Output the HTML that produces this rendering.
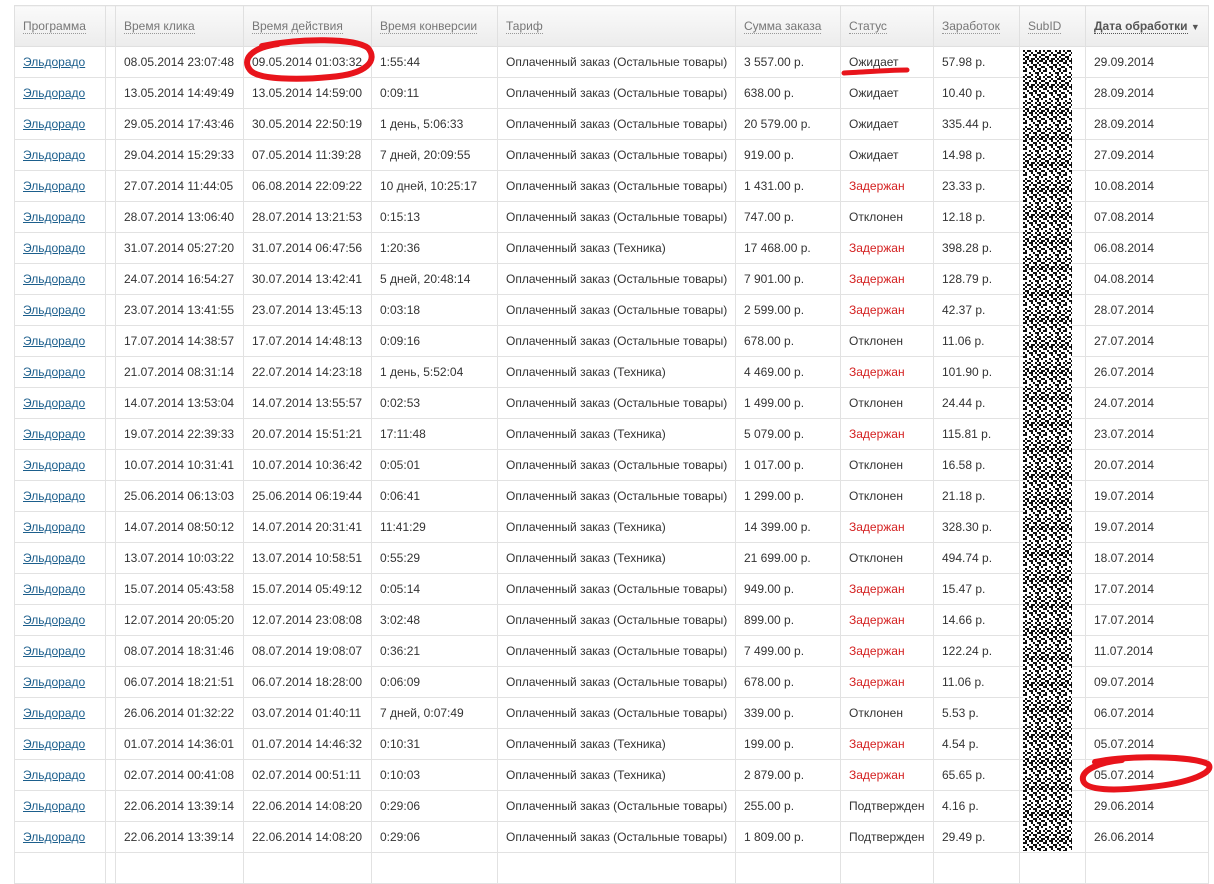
<!DOCTYPE html>
<html><head><meta charset="utf-8"><style>
body{margin:0;background:#fff;width:1214px;height:860px;overflow:hidden;position:relative;font-family:"Liberation Sans",Arial,sans-serif;font-size:12px;color:#333}
table{position:absolute;left:14px;top:5px;border-collapse:collapse;table-layout:fixed;width:1194px}
td,th{border:1px solid #e2e2e2;height:30px;padding:0 0 0 8px;white-space:nowrap;overflow:hidden;text-align:left;font-weight:normal}
th{height:40px;background:linear-gradient(#fafafa,#ececec);color:#777;border-color:#e0e0e0}
th span{border-bottom:1px dotted #999}
th.s{color:#555;font-weight:bold}
th.s span{border-bottom:1px dotted #555}
td a{color:#1b5e8c;text-decoration:underline}
.r{color:#d42020}
td.e,th.e{padding:0}
#noise{position:absolute;left:1023px;top:50px;width:49px;height:801px}
</style></head><body>
<table>
<colgroup><col style="width:91px"><col style="width:10px"><col style="width:128px"><col style="width:128px"><col style="width:126px"><col style="width:238px"><col style="width:105px"><col style="width:93px"><col style="width:86px"><col style="width:66px"><col style="width:123px"></colgroup>
<tr><th><span>Программа</span></th><th class="e"></th><th><span>Время клика</span></th><th><span>Время действия</span></th><th><span>Время конверсии</span></th><th><span>Тариф</span></th><th><span>Сумма заказа</span></th><th><span>Статус</span></th><th><span>Заработок</span></th><th><span>SubID</span></th><th class="s"><span>Дата обработки</span> <span style="border:0;font-size:9px">▼</span></th></tr>
<tr><td><a>Эльдорадо</a></td><td class="e"></td><td>08.05.2014 23:07:48</td><td>09.05.2014 01:03:32</td><td>1:55:44</td><td>Оплаченный заказ (Остальные товары)</td><td>3 557.00 р.</td><td>Ожидает</td><td>57.98 р.</td><td></td><td>29.09.2014</td></tr>
<tr><td><a>Эльдорадо</a></td><td class="e"></td><td>13.05.2014 14:49:49</td><td>13.05.2014 14:59:00</td><td>0:09:11</td><td>Оплаченный заказ (Остальные товары)</td><td>638.00 р.</td><td>Ожидает</td><td>10.40 р.</td><td></td><td>28.09.2014</td></tr>
<tr><td><a>Эльдорадо</a></td><td class="e"></td><td>29.05.2014 17:43:46</td><td>30.05.2014 22:50:19</td><td>1 день, 5:06:33</td><td>Оплаченный заказ (Остальные товары)</td><td>20 579.00 р.</td><td>Ожидает</td><td>335.44 р.</td><td></td><td>28.09.2014</td></tr>
<tr><td><a>Эльдорадо</a></td><td class="e"></td><td>29.04.2014 15:29:33</td><td>07.05.2014 11:39:28</td><td>7 дней, 20:09:55</td><td>Оплаченный заказ (Остальные товары)</td><td>919.00 р.</td><td>Ожидает</td><td>14.98 р.</td><td></td><td>27.09.2014</td></tr>
<tr><td><a>Эльдорадо</a></td><td class="e"></td><td>27.07.2014 11:44:05</td><td>06.08.2014 22:09:22</td><td>10 дней, 10:25:17</td><td>Оплаченный заказ (Остальные товары)</td><td>1 431.00 р.</td><td class="r">Задержан</td><td>23.33 р.</td><td></td><td>10.08.2014</td></tr>
<tr><td><a>Эльдорадо</a></td><td class="e"></td><td>28.07.2014 13:06:40</td><td>28.07.2014 13:21:53</td><td>0:15:13</td><td>Оплаченный заказ (Остальные товары)</td><td>747.00 р.</td><td>Отклонен</td><td>12.18 р.</td><td></td><td>07.08.2014</td></tr>
<tr><td><a>Эльдорадо</a></td><td class="e"></td><td>31.07.2014 05:27:20</td><td>31.07.2014 06:47:56</td><td>1:20:36</td><td>Оплаченный заказ (Техника)</td><td>17 468.00 р.</td><td class="r">Задержан</td><td>398.28 р.</td><td></td><td>06.08.2014</td></tr>
<tr><td><a>Эльдорадо</a></td><td class="e"></td><td>24.07.2014 16:54:27</td><td>30.07.2014 13:42:41</td><td>5 дней, 20:48:14</td><td>Оплаченный заказ (Остальные товары)</td><td>7 901.00 р.</td><td class="r">Задержан</td><td>128.79 р.</td><td></td><td>04.08.2014</td></tr>
<tr><td><a>Эльдорадо</a></td><td class="e"></td><td>23.07.2014 13:41:55</td><td>23.07.2014 13:45:13</td><td>0:03:18</td><td>Оплаченный заказ (Остальные товары)</td><td>2 599.00 р.</td><td class="r">Задержан</td><td>42.37 р.</td><td></td><td>28.07.2014</td></tr>
<tr><td><a>Эльдорадо</a></td><td class="e"></td><td>17.07.2014 14:38:57</td><td>17.07.2014 14:48:13</td><td>0:09:16</td><td>Оплаченный заказ (Остальные товары)</td><td>678.00 р.</td><td>Отклонен</td><td>11.06 р.</td><td></td><td>27.07.2014</td></tr>
<tr><td><a>Эльдорадо</a></td><td class="e"></td><td>21.07.2014 08:31:14</td><td>22.07.2014 14:23:18</td><td>1 день, 5:52:04</td><td>Оплаченный заказ (Техника)</td><td>4 469.00 р.</td><td class="r">Задержан</td><td>101.90 р.</td><td></td><td>26.07.2014</td></tr>
<tr><td><a>Эльдорадо</a></td><td class="e"></td><td>14.07.2014 13:53:04</td><td>14.07.2014 13:55:57</td><td>0:02:53</td><td>Оплаченный заказ (Остальные товары)</td><td>1 499.00 р.</td><td>Отклонен</td><td>24.44 р.</td><td></td><td>24.07.2014</td></tr>
<tr><td><a>Эльдорадо</a></td><td class="e"></td><td>19.07.2014 22:39:33</td><td>20.07.2014 15:51:21</td><td>17:11:48</td><td>Оплаченный заказ (Техника)</td><td>5 079.00 р.</td><td class="r">Задержан</td><td>115.81 р.</td><td></td><td>23.07.2014</td></tr>
<tr><td><a>Эльдорадо</a></td><td class="e"></td><td>10.07.2014 10:31:41</td><td>10.07.2014 10:36:42</td><td>0:05:01</td><td>Оплаченный заказ (Остальные товары)</td><td>1 017.00 р.</td><td>Отклонен</td><td>16.58 р.</td><td></td><td>20.07.2014</td></tr>
<tr><td><a>Эльдорадо</a></td><td class="e"></td><td>25.06.2014 06:13:03</td><td>25.06.2014 06:19:44</td><td>0:06:41</td><td>Оплаченный заказ (Остальные товары)</td><td>1 299.00 р.</td><td>Отклонен</td><td>21.18 р.</td><td></td><td>19.07.2014</td></tr>
<tr><td><a>Эльдорадо</a></td><td class="e"></td><td>14.07.2014 08:50:12</td><td>14.07.2014 20:31:41</td><td>11:41:29</td><td>Оплаченный заказ (Техника)</td><td>14 399.00 р.</td><td class="r">Задержан</td><td>328.30 р.</td><td></td><td>19.07.2014</td></tr>
<tr><td><a>Эльдорадо</a></td><td class="e"></td><td>13.07.2014 10:03:22</td><td>13.07.2014 10:58:51</td><td>0:55:29</td><td>Оплаченный заказ (Техника)</td><td>21 699.00 р.</td><td>Отклонен</td><td>494.74 р.</td><td></td><td>18.07.2014</td></tr>
<tr><td><a>Эльдорадо</a></td><td class="e"></td><td>15.07.2014 05:43:58</td><td>15.07.2014 05:49:12</td><td>0:05:14</td><td>Оплаченный заказ (Остальные товары)</td><td>949.00 р.</td><td class="r">Задержан</td><td>15.47 р.</td><td></td><td>17.07.2014</td></tr>
<tr><td><a>Эльдорадо</a></td><td class="e"></td><td>12.07.2014 20:05:20</td><td>12.07.2014 23:08:08</td><td>3:02:48</td><td>Оплаченный заказ (Остальные товары)</td><td>899.00 р.</td><td class="r">Задержан</td><td>14.66 р.</td><td></td><td>17.07.2014</td></tr>
<tr><td><a>Эльдорадо</a></td><td class="e"></td><td>08.07.2014 18:31:46</td><td>08.07.2014 19:08:07</td><td>0:36:21</td><td>Оплаченный заказ (Остальные товары)</td><td>7 499.00 р.</td><td class="r">Задержан</td><td>122.24 р.</td><td></td><td>11.07.2014</td></tr>
<tr><td><a>Эльдорадо</a></td><td class="e"></td><td>06.07.2014 18:21:51</td><td>06.07.2014 18:28:00</td><td>0:06:09</td><td>Оплаченный заказ (Остальные товары)</td><td>678.00 р.</td><td class="r">Задержан</td><td>11.06 р.</td><td></td><td>09.07.2014</td></tr>
<tr><td><a>Эльдорадо</a></td><td class="e"></td><td>26.06.2014 01:32:22</td><td>03.07.2014 01:40:11</td><td>7 дней, 0:07:49</td><td>Оплаченный заказ (Остальные товары)</td><td>339.00 р.</td><td>Отклонен</td><td>5.53 р.</td><td></td><td>06.07.2014</td></tr>
<tr><td><a>Эльдорадо</a></td><td class="e"></td><td>01.07.2014 14:36:01</td><td>01.07.2014 14:46:32</td><td>0:10:31</td><td>Оплаченный заказ (Техника)</td><td>199.00 р.</td><td class="r">Задержан</td><td>4.54 р.</td><td></td><td>05.07.2014</td></tr>
<tr><td><a>Эльдорадо</a></td><td class="e"></td><td>02.07.2014 00:41:08</td><td>02.07.2014 00:51:11</td><td>0:10:03</td><td>Оплаченный заказ (Техника)</td><td>2 879.00 р.</td><td class="r">Задержан</td><td>65.65 р.</td><td></td><td>05.07.2014</td></tr>
<tr><td><a>Эльдорадо</a></td><td class="e"></td><td>22.06.2014 13:39:14</td><td>22.06.2014 14:08:20</td><td>0:29:06</td><td>Оплаченный заказ (Остальные товары)</td><td>255.00 р.</td><td>Подтвержден</td><td>4.16 р.</td><td></td><td>29.06.2014</td></tr>
<tr><td><a>Эльдорадо</a></td><td class="e"></td><td>22.06.2014 13:39:14</td><td>22.06.2014 14:08:20</td><td>0:29:06</td><td>Оплаченный заказ (Остальные товары)</td><td>1 809.00 р.</td><td>Подтвержден</td><td>29.49 р.</td><td></td><td>26.06.2014</td></tr>
<tr><td></td><td class="e"></td><td></td><td></td><td></td><td></td><td></td><td></td><td></td><td></td><td></td></tr>
</table>
<svg id="noise" width="49" height="801">
<defs><pattern id="p" width="20" height="26" patternUnits="userSpaceOnUse">
<rect width="20" height="26" fill="#fff"/>
<g fill="#111">
<rect x="0" y="0" width="2" height="2"/><rect x="4" y="0" width="4" height="2"/><rect x="12" y="0" width="2" height="2"/><rect x="16" y="0" width="2" height="2"/>
<rect x="2" y="2" width="2" height="2"/><rect x="8" y="2" width="2" height="2"/><rect x="14" y="2" width="4" height="2"/>
<rect x="0" y="4" width="2" height="2"/><rect x="6" y="4" width="2" height="2"/><rect x="10" y="4" width="4" height="2"/><rect x="18" y="4" width="2" height="2"/>
<rect x="2" y="6" width="4" height="2"/><rect x="12" y="6" width="2" height="2"/><rect x="16" y="6" width="2" height="2"/>
<rect x="0" y="8" width="2" height="2"/><rect x="4" y="8" width="2" height="2"/><rect x="8" y="8" width="4" height="2"/><rect x="14" y="8" width="2" height="2"/><rect x="18" y="8" width="2" height="2"/>
<rect x="2" y="10" width="2" height="2"/><rect x="6" y="10" width="4" height="2"/><rect x="12" y="10" width="2" height="2"/><rect x="16" y="10" width="4" height="2"/>
<rect x="0" y="12" width="4" height="2"/><rect x="8" y="12" width="2" height="2"/><rect x="14" y="12" width="2" height="2"/>
<rect x="4" y="14" width="2" height="2"/><rect x="10" y="14" width="4" height="2"/><rect x="16" y="14" width="2" height="2"/>
<rect x="0" y="16" width="2" height="2"/><rect x="6" y="16" width="4" height="2"/><rect x="12" y="16" width="2" height="2"/><rect x="18" y="16" width="2" height="2"/>
<rect x="2" y="18" width="2" height="2"/><rect x="8" y="18" width="2" height="2"/><rect x="14" y="18" width="4" height="2"/>
<rect x="0" y="20" width="4" height="2"/><rect x="10" y="20" width="2" height="2"/><rect x="16" y="20" width="2" height="2"/>
<rect x="6" y="22" width="2" height="2"/><rect x="12" y="22" width="4" height="2"/><rect x="18" y="22" width="2" height="2"/>
<rect x="2" y="24" width="2" height="2"/><rect x="8" y="24" width="2" height="2"/><rect x="14" y="24" width="2" height="2"/>
</g></pattern></defs>
<rect width="49" height="801" fill="url(#p)"/>
</svg>
<svg style="position:absolute;left:0;top:0" width="1214" height="860">
<g fill="none" stroke="#e8141b" stroke-linecap="round">
<path d="M262 46 C300 38 355 38 368 48 C378 60 368 74 330 77 C300 80 258 80 250 70 C242 60 250 48 278 44" stroke-width="6"/>
<path d="M844 73 C865 72 890 70 907 70" stroke-width="5"/>
<path d="M1095 762 C1130 755 1192 756 1208 764 C1216 772 1190 783 1150 787 C1115 791 1085 791 1083 780 C1081 770 1100 762 1122 760" stroke-width="6"/>
</g></svg>
</body></html>
